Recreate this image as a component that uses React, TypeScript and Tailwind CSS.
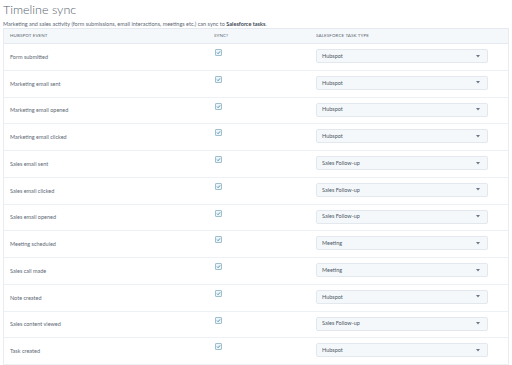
import React from "react";

const rows: [string, string][] = [
  ["Form submitted", "Hubspot"],
  ["Marketing email sent", "Hubspot"],
  ["Marketing email opened", "Hubspot"],
  ["Marketing email clicked", "Hubspot"],
  ["Sales email sent", "Sales Follow-up"],
  ["Sales email clicked", "Sales Follow-up"],
  ["Sales email opened", "Sales Follow-up"],
  ["Meeting scheduled", "Meeting"],
  ["Sales call made", "Meeting"],
  ["Note created", "Hubspot"],
  ["Sales content viewed", "Sales Follow-up"],
  ["Task created", "Hubspot"],
];

const Check = () => (
  <div className="w-[7px] h-[7px] mt-[5px] border border-[#9fbfcf] bg-[#eef5f8] rounded-[1px] flex items-center justify-center">
    <svg width="5" height="5" viewBox="0 0 10 10">
      <path d="M2 5.2 L4.2 7.4 L8.2 2.8" fill="none" stroke="#2f7f9a" strokeWidth="1.6" />
    </svg>
  </div>
);

const App = () => {
  return (
    <div
      className="w-[512px] h-[365px] overflow-hidden bg-white text-[#4b5866]"
      style={{ fontFamily: "Lato, 'Open Sans', sans-serif" }}
    >
      <div className="pl-[3px] pt-[2px] text-[12.5px] leading-[15px] font-light text-[#55616e]">
        Timeline sync
      </div>
      <div className="pl-[3px] pt-[4px] text-[5.5px] leading-[7px] text-[#5d6975]">
        Marketing and sales activity (form submissions, email interactions, meetings etc.) can sync to{" "}
        <span className="font-bold text-[#3d4854]">Salesforce tasks</span>.
      </div>
      <div className="ml-[3px] w-[506px] border-l border-r border-[#e8ecf0]">
        <div className="grid grid-cols-[204px_102px_1fr] h-[16px] bg-[#f5f8fa] border-t border-b border-[#e5eaf0] text-[4.5px] uppercase tracking-[0.1px] text-[#5d6975] items-center">
          <div className="pl-[6px]">HubSpot event</div>
          <div className="pl-[6px]">Sync?</div>
          <div className="pl-[6px]">Salesforce task type</div>
        </div>
        {rows.map(([name, type]) => (
          <div
            key={name}
            className="grid grid-cols-[204px_102px_1fr] h-[26.75px] border-b border-[#edf1f5]"
          >
            <div className="pl-[6px] flex items-center text-[5.5px] text-[#5d6975]">{name}</div>
            <div className="pl-[7px]">
              <Check />
            </div>
            <div className="pl-[6px] pt-[5px]">
              <div className="w-[172px] h-[14px] bg-[#f5f8fa] border border-[#e3e8ee] rounded-[2px] flex items-center justify-between pl-[5px] pr-[7px]">
                <span className="text-[5.5px] text-[#4b5866]">{type}</span>
                <svg width="4" height="3" viewBox="0 0 4 3">
                  <path d="M0 0 L4 0 L2 2.5 Z" fill="#6b7785" />
                </svg>
              </div>
            </div>
          </div>
        ))}
      </div>
    </div>
  );
};

export default App;
